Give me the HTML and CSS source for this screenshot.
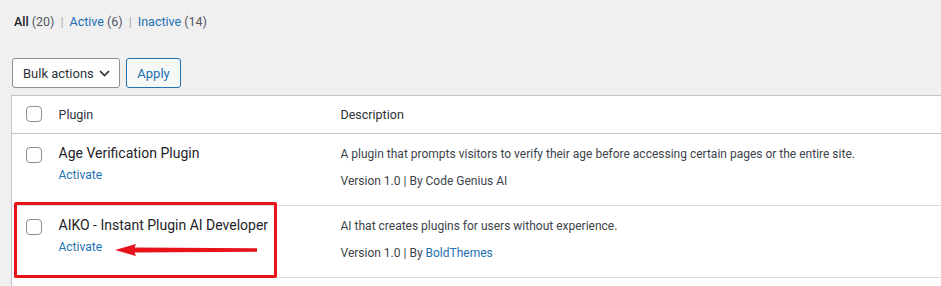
FILE: index.html
```html
<!DOCTYPE html>
<html lang="en">
<head>
  <meta charset="UTF-8">
  <title>Plugins</title>
  <link rel="stylesheet" href="styles.css">
</head>
<body>
  <div class="wrap">
    <!-- Filters -->
    <ul class="subsubsub">
      <li><b>All</b> <span class="count">(20)</span></li>
      <li class="sep">|</li>
      <li><a href="#">Active <span class="count">(6)</span></a></li>
      <li class="sep">|</li>
      <li><a href="#">Inactive <span class="count">(14)</span></a></li>
    </ul>

    <!-- Bulk actions -->
    <div class="tablenav">
      <div class="select">
        <span>Bulk actions</span>
        <svg width="11" height="7" viewBox="0 0 11 7"><path d="M1 1l4.5 4.5L10 1" fill="none" stroke="#2c3338" stroke-width="1.7"/></svg>
      </div>
      <button class="button">Apply</button>
    </div>

    <table class="plugins">
      <colgroup>
        <col class="col-check">
        <col class="col-name">
        <col>
      </colgroup>
      <thead>
        <tr>
          <th class="check"><span class="cb"></span></th>
          <th class="name">Plugin</th>
          <th class="desc">Description</th>
        </tr>
      </thead>
      <tbody>
        <tr>
          <td class="check"><span class="cb"></span></td>
          <td class="name">
            <div class="title">Age Verification Plugin</div>
            <a class="action" href="#">Activate</a>
          </td>
          <td class="desc">
            <p>A plugin that prompts visitors to verify their age before accessing certain pages or the entire site.</p>
            <p class="meta">Version 1.0 | By Code Genius AI</p>
          </td>
        </tr>
        <tr>
          <td class="check"><span class="cb"></span></td>
          <td class="name">
            <div class="title">AIKO - Instant Plugin AI Developer</div>
            <a class="action" href="#">Activate</a>
            <!-- annotation -->
            <div class="highlight"></div>
            <svg class="arrow" width="143" height="16" viewBox="0 0 143 16">
              <path d="M0 8 21 2 19.5 5.6 142 6.3 142 9.7 19.5 10.4 21 14Z" fill="#e8121b"/>
            </svg>
          </td>
          <td class="desc">
            <p>AI that creates plugins for users without experience.</p>
            <p class="meta">Version 1.0 | By <a href="#">BoldThemes</a></p>
          </td>
        </tr>
        <tr class="filler">
          <td colspan="3"></td>
        </tr>
      </tbody>
    </table>
  </div>
</body>
</html>
```

FILE: styles.css
```css
body {
  margin: 0;
  background: #f0f0f1;
  color: #3c434a;
  font-family: Roboto, "Noto Sans", sans-serif;
  font-size: 12px;
  overflow: hidden;
}
a {
  color: #2271b1;
  text-decoration: none;
}

/* Filters */
.subsubsub {
  list-style: none;
  margin: 0;
  padding: 13px 0 0 14px;
  display: flex;
  gap: 6px;
  height: 18px;
  line-height: 18px;
  font-size: 12.5px;
  color: #646970;
}
.subsubsub b {
  color: #1d2327;
  font-weight: 500;
}
.subsubsub .count {
  color: #50575e;
}
.subsubsub .sep {
  color: #a7aaad;
}

/* Bulk actions */
.tablenav {
  display: flex;
  gap: 6px;
  margin: 27px 0 0 12px;
  height: 30px;
}
.select {
  display: flex;
  align-items: center;
  justify-content: space-between;
  box-sizing: border-box;
  width: 108px;
  padding: 0 9px 0 10px;
  background: #fff;
  border: 1px solid #8c8f94;
  border-radius: 3px;
  color: #2c3338;
  font-size: 13px;
}
.button {
  box-sizing: border-box;
  width: 55px;
  background: #f6f7f7;
  border: 1px solid #2271b1;
  border-radius: 3px;
  color: #2271b1;
  font: inherit;
  font-size: 13px;
  padding: 0;
}

/* Table */
.plugins {
  margin: 7px 0 0 11px;
  width: 960px;
  border-collapse: collapse;
  background: #fff;
  border: 1px solid #c3c4c7;
  table-layout: fixed;
}
.col-check {
  width: 36px;
}
.col-name {
  width: 283px;
}
.plugins th,
.plugins td {
  text-align: left;
  vertical-align: top;
  padding: 0;
}
.plugins th {
  font-weight: 400;
  color: #2c3338;
  font-size: 12.5px;
  height: 36px;
  padding-top: 1px;
  line-height: 36px;
  border-bottom: 1px solid #c3c4c7;
}
.plugins .name {
  padding-left: 11px;
}
.plugins .desc {
  padding-left: 10px;
}
.cb {
  display: block;
  box-sizing: border-box;
  width: 16px;
  height: 16px;
  margin-left: 14px;
  border: 1px solid #8c8f94;
  border-radius: 4px;
  background: #fff;
}
th .cb {
  margin-top: 9px;
}
td .cb {
  margin-top: 13px;
}
tbody tr {
  height: 72px;
  border-bottom: 1px solid #dcdcde;
}
tbody tr.filler {
  height: 20px;
  border-bottom: 0;
}
td.name {
  position: relative;
  padding-top: 9px;
}
.title {
  color: #1d2327;
  font-size: 14px;
  line-height: 20px;
}
.action {
  display: inline-block;
  margin-top: 2px;
  line-height: 20px;
}
td.desc {
  padding-top: 10px;
}
td.desc p {
  margin: 0;
  line-height: 20px;
}
td.desc .meta {
  margin-top: 7px;
}

/* Annotation */
.highlight {
  position: absolute;
  left: -34px;
  top: -4px;
  width: 263px;
  height: 76px;
  box-sizing: border-box;
  border: 3px solid #e8121b;
  border-radius: 2px;
}
.arrow {
  position: absolute;
  left: 67px;
  top: 36px;
}
```
